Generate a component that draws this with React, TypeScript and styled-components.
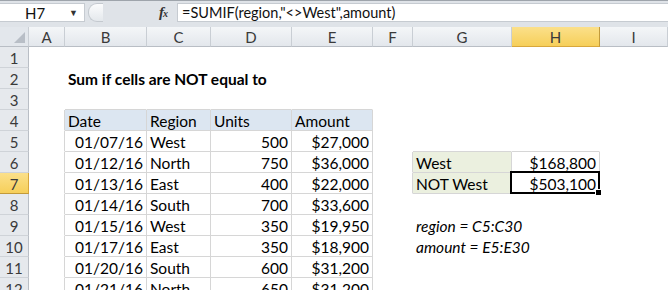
import React from 'react'
import styled, { createGlobalStyle } from 'styled-components'

const GlobalStyle = createGlobalStyle`
html, body {
  margin: 0;
  padding: 0;
  background: #ffffff;
  overflow: hidden;
}
body {
  font-family: Lato, "Open Sans", "Liberation Sans", sans-serif;
}
`

const Window = styled.div`
width: 668px;
height: 290px;
overflow: hidden;
background: #dfe3e8;
`

const FormulaBar = styled.div`
display: flex;
align-items: stretch;
height: 22px;
box-sizing: border-box;
padding-top: 2px;
border-top: 1px solid #9ea4ab;
background: #dfe3e8;
`

const NameBox = styled.div`
display: flex;
align-items: center;
justify-content: space-between;
width: 85px;
box-sizing: border-box;
padding: 0 6px 0 25px;
background: #ffffff;
border: 1px solid #c6cbd1;
border-left: none;
font-size: 15px;
color: #111;
`

const Arrow = styled.span`
font-size: 9px;
color: #333;
`

const Middle = styled.div`
display: flex;
align-items: center;
justify-content: space-between;
width: 92px;
padding: 0 10px 0 3px;
box-sizing: border-box;
`

const Pill = styled.div`
width: 14px;
height: 17px;
border-radius: 9px 0 0 9px;
border: 1px solid #c4c9cf;
border-right: none;
background: linear-gradient(#fbfcfd, #e4e8ec);
`

const Fx = styled.span`
font-family: "Liberation Serif", serif;
font-style: italic;
font-weight: bold;
font-size: 15px;
color: #333;
letter-spacing: -1px;
small {
  font-size: 10px;
}
`

const FormulaField = styled.div`
flex: 1;
display: flex;
align-items: center;
padding-left: 4px;
background: #ffffff;
border: 1px solid #c6cbd1;
border-right: none;
font-size: 14.5px;
color: #111;
`

const Gap = styled.div`
height: 5px;
background: #dfe3e8;
`

const Sheet = styled.table`
table-layout: fixed;
border-collapse: separate;
border-spacing: 0;
width: 668px;
background: #ffffff;
font-size: 15.5px;
color: #000;
`

const Col = styled.col<{ $w: number }>`
width: ${p => p.$w}px;
`

const ColHead = styled.th<{ $sel?: boolean }>`
height: 20px;
box-sizing: border-box;
padding: 1px 0 0 0;
line-height: 18px;
font-weight: normal;
font-size: 15px;
color: #3a3a3a;
text-align: center;
background: ${p => (p.$sel ? 'linear-gradient(#fbe08a, #f6cf5a)' : 'linear-gradient(#f4f6f8, #e3e7ec)')};
border-right: 1px solid ${p => (p.$sel ? '#c29a3a' : '#c9ced4')};
border-bottom: 1px solid ${p => (p.$sel ? '#d8a73c' : '#b9bec5')};
`

const Corner = styled.th`
position: relative;
padding: 0;
background: #e3e7ec;
border-right: 1px solid #c9ced4;
border-bottom: 1px solid #b9bec5;
svg {
  position: absolute;
  right: 3px;
  bottom: 3px;
}
`

const RowHead = styled.th<{ $sel?: boolean }>`
height: 21px;
box-sizing: border-box;
padding: 3px 0 0 0;
line-height: 17px;
font-weight: normal;
font-size: 15px;
color: #3a3a3a;
text-align: center;
background: ${p => (p.$sel ? 'linear-gradient(#fbe08a, #f6cf5a)' : '#e6e9ed')};
border-right: 1px solid ${p => (p.$sel ? '#d8a73c' : '#b9bec5')};
border-bottom: 1px solid ${p => (p.$sel ? '#c29a3a' : '#cfd3d8')};
`

const Cell = styled.td<{
  $align?: 'left' | 'right'
  $bg?: string
  $right?: string
  $bottom?: string
  $bold?: boolean
  $italic?: boolean
}>`
position: relative;
height: 21px;
box-sizing: border-box;
padding: 0 3px 0 3px;
vertical-align: bottom;
line-height: 17px;
white-space: nowrap;
overflow: visible;
text-align: ${p => p.$align || 'left'};
font-weight: ${p => (p.$bold ? 'bold' : 'normal')};
font-style: ${p => (p.$italic ? 'italic' : 'normal')};
background: ${p => p.$bg || 'transparent'};
border-right: 1px solid ${p => p.$right || 'transparent'};
border-bottom: 1px solid ${p => p.$bottom || 'transparent'};
`

const Selection = styled.div`
position: absolute;
top: -2px;
left: -2px;
right: -1px;
bottom: -1px;
border: 2px solid #000;
pointer-events: none;
`

const Handle = styled.div`
position: absolute;
right: -4px;
bottom: -4px;
width: 5px;
height: 5px;
background: #000;
border: 1px solid #fff;
`

const LINE = '#d6d6d6'
const HEAD_BG = '#dce6f1'
const LABEL_BG = '#ebf0df'

const widths = [29, 36, 82, 64, 81, 81, 40, 99, 88, 68]
const letters = ['A', 'B', 'C', 'D', 'E', 'F', 'G', 'H', 'I']

const sales = [
  ['01/07/16', 'West', '500', '$27,000'],
  ['01/12/16', 'North', '750', '$36,000'],
  ['01/13/16', 'East', '400', '$22,000'],
  ['01/14/16', 'South', '700', '$33,600'],
  ['01/15/16', 'West', '350', '$19,950'],
  ['01/17/16', 'East', '350', '$18,900'],
  ['01/20/16', 'South', '600', '$31,200'],
  ['01/21/16', 'North', '650', '$31,200'],
]

type Side = { label: string; value: string; selected?: boolean }
const summary: Record<number, Side> = {
  6: { label: 'West', value: '$168,800' },
  7: { label: 'NOT West', value: '$503,100', selected: true },
}
const notes: Record<number, string> = {
  9: 'region = C5:C30',
  10: 'amount = E5:E30',
}

const Spare = ({ n }: { n: number }) => (
  <>
    {Array.from({ length: n }).map((_, i) => (
      <Cell key={i} />
    ))}
  </>
)

const renderRight = (row: number) => {
  const s = summary[row]
  if (s) {
    return (
      <>
        <Cell $right={LINE} />
        <Cell $bg={LABEL_BG} $right={LINE} $bottom={LINE}>{s.label}</Cell>
        <Cell $align="right" $bg="#ffffff" $right={LINE} $bottom={LINE}>
          {s.value}
          {s.selected && (
            <Selection>
              <Handle />
            </Selection>
          )}
        </Cell>
        <Cell />
      </>
    )
  }
  if (notes[row]) {
    return (
      <>
        <Cell />
        <Cell $italic>{notes[row]}</Cell>
        <Cell />
        <Cell />
      </>
    )
  }
  const edge = row === 5
  return (
    <>
      <Cell />
      <Cell $bottom={edge ? LINE : undefined} />
      <Cell $bottom={edge ? LINE : undefined} />
      <Cell />
    </>
  )
}

export default function App() {
  return (
    <Window>
      <GlobalStyle />
      <FormulaBar>
        <NameBox>
          H7
          <Arrow>▼</Arrow>
        </NameBox>
        <Middle>
          <Pill />
          <Fx>f<small>x</small></Fx>
        </Middle>
        <FormulaField>=SUMIF(region,"&lt;&gt;West",amount)</FormulaField>
      </FormulaBar>
      <Gap />
      <Sheet>
        <colgroup>
          {widths.map((w, i) => (
            <Col key={i} $w={w} />
          ))}
        </colgroup>
        <thead>
          <tr>
            <Corner>
              <svg width="11" height="11" viewBox="0 0 11 11">
                <polygon points="11,0 11,11 0,11" fill="#b8bec6" />
              </svg>
            </Corner>
            {letters.map(l => (
              <ColHead key={l} $sel={l === 'H'}>{l}</ColHead>
            ))}
          </tr>
        </thead>
        <tbody>
          <tr>
            <RowHead>1</RowHead>
            <Spare n={9} />
          </tr>
          <tr>
            <RowHead>2</RowHead>
            <Cell />
            <Cell $bold>Sum if cells are NOT equal to</Cell>
            <Spare n={7} />
          </tr>
          <tr>
            <RowHead>3</RowHead>
            <Cell />
            <Cell $bottom={LINE} />
            <Cell $bottom={LINE} />
            <Cell $bottom={LINE} />
            <Cell $bottom={LINE} />
            <Spare n={4} />
          </tr>
          <tr>
            <RowHead>4</RowHead>
            <Cell $right={LINE} />
            <Cell $bg={HEAD_BG} $right={LINE} $bottom={LINE}>Date</Cell>
            <Cell $bg={HEAD_BG} $right={LINE} $bottom={LINE}>Region</Cell>
            <Cell $bg={HEAD_BG} $right={LINE} $bottom={LINE}>Units</Cell>
            <Cell $bg={HEAD_BG} $right={LINE} $bottom={LINE}>Amount</Cell>
            <Spare n={4} />
          </tr>
          {sales.map((r, i) => {
            const row = i + 5
            return (
              <tr key={row}>
                <RowHead $sel={row === 7}>{row}</RowHead>
                <Cell $right={LINE} />
                <Cell $align="right" $right={LINE} $bottom={LINE}>{r[0]}</Cell>
                <Cell $right={LINE} $bottom={LINE}>{r[1]}</Cell>
                <Cell $align="right" $right={LINE} $bottom={LINE}>{r[2]}</Cell>
                <Cell $align="right" $right={LINE} $bottom={LINE}>{r[3]}</Cell>
                {renderRight(row)}
              </tr>
            )
          })}
        </tbody>
      </Sheet>
    </Window>
  )
}
